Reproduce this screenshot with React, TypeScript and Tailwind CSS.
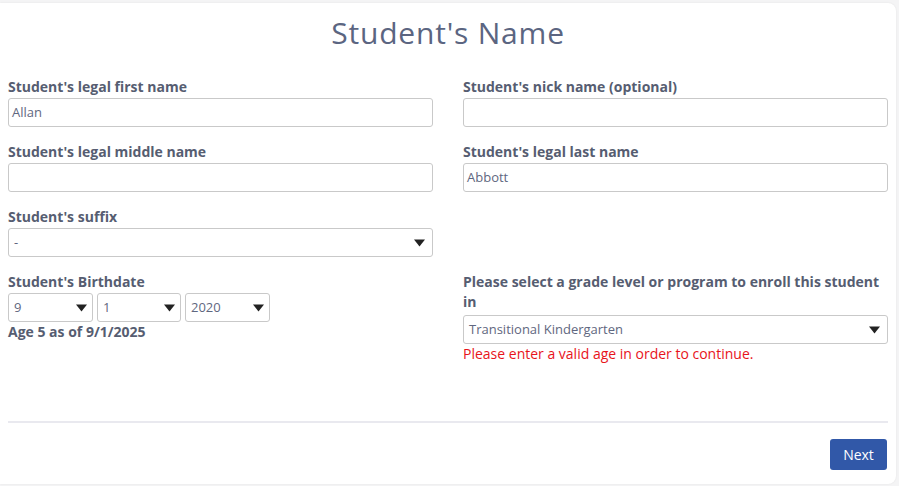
import React from "react";

const font = { fontFamily: "'Open Sans', 'Noto Sans', sans-serif" };

function Arrow() {
  return (
    <svg width="11" height="8" viewBox="0 0 11 8" className="shrink-0">
      <path d="M0 0.5 L11 0.5 L5.5 7.5 Z" fill="#222" />
    </svg>
  );
}

function Label({ children, className = "" }: { children: React.ReactNode; className?: string }) {
  return (
    <div className={`text-[14px] font-bold leading-5 text-[#565d71] ${className}`}>{children}</div>
  );
}

function TextInput({ value }: { value?: string }) {
  return (
    <div className="mt-px flex h-[29px] items-center rounded-[3px] border border-[#c9c9c9] bg-white pl-[3px] text-[13px] text-[#5f6780]">
      {value}
    </div>
  );
}

function Select({ value, className = "", textClass = "text-[13px]", pr = "pr-[7px]" }: { value: string; className?: string; textClass?: string; pr?: string }) {
  return (
    <div
      className={`flex h-[29px] items-center justify-between rounded-[3px] border border-[#c9c9c9] bg-white pl-[5px] ${pr} ${textClass} text-[#5f6780] ${className}`}
    >
      <span>{value}</span>
      <Arrow />
    </div>
  );
}

export default function App() {
  return (
    <div className="h-[486px] w-[899px] overflow-hidden bg-[#f4f4f5] pt-[3px] pr-[3px]" style={font}>
      <div className="flex h-[481px] w-[896px] flex-col rounded-r-lg bg-white shadow-[0_0_2px_rgba(0,0,0,0.08)]">
        <h1 className="pt-[12px] text-center text-[30px] font-normal leading-9 tracking-[0.8px] text-[#5b6581]">
          Student's Name
        </h1>
        <div className="mt-[26px] grid grid-cols-2 gap-x-[30px] px-2">
          <div className="mb-[15px]">
            <Label>Student's legal first name</Label>
            <TextInput value="Allan" />
          </div>
          <div className="mb-[15px]">
            <Label>Student's nick name (optional)</Label>
            <TextInput />
          </div>
          <div className="mb-[15px]">
            <Label>Student's legal middle name</Label>
            <TextInput />
          </div>
          <div className="mb-[15px]">
            <Label>Student's legal last name</Label>
            <TextInput value="Abbott" />
          </div>
          <div className="mb-[15px]">
            <Label>Student's suffix</Label>
            <Select value="-" className="mt-px" />
          </div>
          <div />
          <div>
            <Label>Student's Birthdate</Label>
            <div className="mt-px flex gap-1">
              <Select value="9" className="w-[85px]" textClass="text-[13px]" pr="pr-[5px]" />
              <Select value="1" className="w-[84px]" textClass="text-[13px]" pr="pr-[5px]" />
              <Select value="2020" className="w-[85px]" textClass="text-[13px]" pr="pr-[5px]" />
            </div>
            <Label>Age 5 as of 9/1/2025</Label>
          </div>
          <div>
            <Label>
              Please select a grade level or program to enroll this student in
            </Label>
            <Select value="Transitional Kindergarten" className="mt-[3px]" textClass="text-[13px]" />
            <div className="text-[14px] leading-5 text-[#e8141b]">
              Please enter a valid age in order to continue.
            </div>
          </div>
        </div>
        <div className="mx-2 mt-[57px] h-[2px] bg-[#e9e9ef]" />
        <div className="mt-4 flex justify-end pr-[9px]">
          <button className="h-[31px] w-[57px] rounded-[3px] bg-[#3158a8] text-[14px] text-white">
            Next
          </button>
        </div>
      </div>
    </div>
  );
}
